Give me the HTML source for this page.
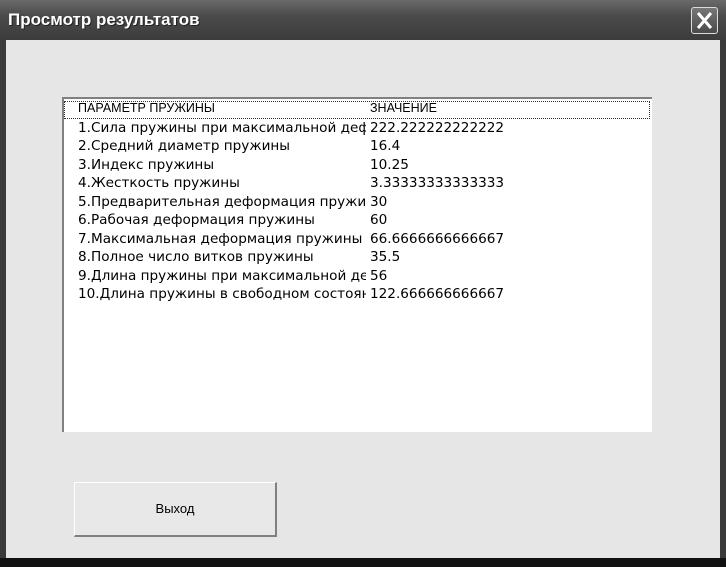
<!DOCTYPE html>
<html><head><meta charset="utf-8"><style>
body{margin:0;width:726px;height:567px;overflow:hidden;background:#000;font-family:"Liberation Sans",sans-serif;}
.win{position:absolute;left:0;top:0;width:726px;height:567px;background:#3a3a3a;}
.title{position:absolute;left:0;top:0;width:726px;height:40px;background:linear-gradient(#6a6a6a,#4a4a4a 40%,#3c3c3c);}
.title span{position:absolute;left:8px;top:10px;color:#fff;font-size:17px;font-weight:bold;text-shadow:1px 1px 0 #222;}
.x{position:absolute;left:691px;top:7px;width:27px;height:27px;border:1px solid #ddd;border-radius:3px;background:linear-gradient(#777,#4a4a4a);box-sizing:border-box;}
.body{position:absolute;left:6px;top:40px;width:714px;height:518px;background:#e6e6e6;}
.list{position:absolute;left:62px;top:97px;width:590px;height:335px;background:#fff;border-left:2px solid #808080;border-top:2px solid #808080;box-sizing:border-box;}
.row{position:absolute;left:0;height:18px;width:586px;font-size:13.6px;color:#000;white-space:nowrap;font-family:"DejaVu Sans",sans-serif;}
.row .a{position:absolute;left:14px;width:288px;overflow:hidden;}
.row .b{position:absolute;left:306px;}
.hdr{outline:1px dotted #333;outline-offset:-1px;font-family:"Liberation Sans",sans-serif;font-size:12.5px;}
.btn{position:absolute;left:74px;top:482px;width:203px;height:55px;background:#e8e8e8;border-top:1px solid #fff;border-left:1px solid #fff;border-right:2px solid #808080;border-bottom:2px solid #808080;box-sizing:border-box;text-align:center;line-height:52px;font-size:13px;}
.bot{position:absolute;left:0;top:558px;width:726px;height:9px;background:#111;}
</style></head><body>
<div class="win">
<div class="title"><span>Просмотр результатов</span>
<div class="x"><svg width="25" height="25" viewBox="0 0 25 25"><path d="M6 5L19 20M19 5L6 20" stroke="#fff" stroke-width="3"/></svg></div></div>
<div class="body"></div>
<div class="list">
<div class="row hdr" style="top:2px"><span class="a">ПАРАМЕТР ПРУЖИНЫ</span><span class="b">ЗНАЧЕНИЕ</span></div>
<div class="row" style="top:21px"><span class="a">1.Сила пружины при максимальной деформации</span><span class="b">222.222222222222</span></div>
<div class="row" style="top:39px"><span class="a">2.Средний диаметр пружины</span><span class="b">16.4</span></div>
<div class="row" style="top:58px"><span class="a">3.Индекс пружины</span><span class="b">10.25</span></div>
<div class="row" style="top:76px"><span class="a">4.Жесткость пружины</span><span class="b">3.33333333333333</span></div>
<div class="row" style="top:95px"><span class="a">5.Предварительная деформация пружины</span><span class="b">30</span></div>
<div class="row" style="top:113px"><span class="a">6.Рабочая деформация пружины</span><span class="b">60</span></div>
<div class="row" style="top:132px"><span class="a">7.Максимальная деформация пружины</span><span class="b">66.6666666666667</span></div>
<div class="row" style="top:150px"><span class="a">8.Полное число витков пружины</span><span class="b">35.5</span></div>
<div class="row" style="top:169px"><span class="a">9.Длина пружины при максимальной деформации</span><span class="b">56</span></div>
<div class="row" style="top:187px"><span class="a">10.Длина пружины в свободном состоянии</span><span class="b">122.666666666667</span></div>
</div>
<div class="btn">Выход</div>
<div class="bot"></div>
</div>
</body></html>
